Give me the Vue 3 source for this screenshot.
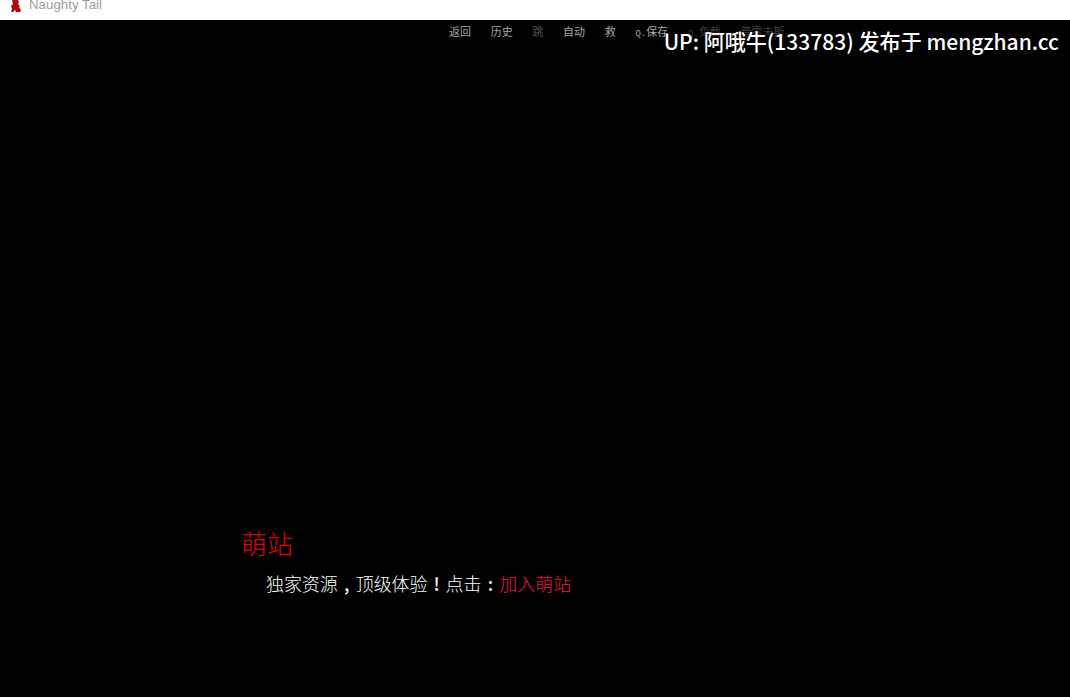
<script setup>
const menu = [
  { label: '返回' },
  { label: '历史' },
  { label: '跳', dim: true },
  { label: '自动' },
  { label: '救' },
  { prefix: 'Q.', label: '保存' },
  { prefix: 'Q.', label: '负载', faint: true },
  { label: '普雷夫斯', faint: true },
]
</script>

<template>
  <div class="window">
    <header class="titlebar">
      <svg class="logo" width="12" height="13" viewBox="0 0 12 13" aria-hidden="true">
        <path d="M2 0h6l1 2-1 2 2 2-1 1 2 3-1 2H6L5 10 3 12 1 12l1-3L1 6l2-2z" fill="#a80c10" />
      </svg>
      <span class="title">Naughty Tail</span>
    </header>
    <main class="stage">
      <nav class="menu">
        <span v-for="item in menu" :key="item.prefix + item.label" :class="{ dim: item.dim, faint: item.faint }"><span v-if="item.prefix" class="prefix">{{ item.prefix }}</span>{{ item.label }}</span>
      </nav>
      <div class="credit">UP: 阿哦牛(133783) 发布于 mengzhan.cc</div>
      <section class="dialog">
        <div class="speaker">萌站</div>
        <p class="line">独家资源<span class="punct">,</span>顶级体验<span class="punct">!</span>点击<span class="punct">:</span><span class="link">加入萌站</span></p>
      </section>
    </main>
  </div>
</template>

<style>
html, body { margin: 0; background: #000; overflow: hidden; }
</style>

<style scoped>
.window { width: 1070px; height: 697px; display: flex; flex-direction: column; overflow: hidden; }
.titlebar { height: 20px; flex: none; background: #fff; display: flex; align-items: flex-start; overflow: hidden; padding-left: 10px; box-sizing: border-box; }
.logo { flex: none; }
.title { margin: -3px 0 0 7px; font: 13.3px/16px "Liberation Sans", Arial, sans-serif; color: #a39b9b; }
.stage { flex: 1; background: #000; position: relative; display: flex; flex-direction: column; }
.menu { display: flex; gap: 19.7px; padding: 5px 0 0 449px; font: 400 11px/13px "Noto Sans CJK SC", sans-serif; color: #a8a8a8; }
.menu .dim { color: #555; }
.menu .faint { color: #3e3e3e; }
.prefix { font: 9px/13px "Liberation Mono", monospace; }
.credit { position: absolute; top: 6px; right: 11px; font: 500 21.05px/30px "Noto Sans CJK SC", "Noto Sans", sans-serif; color: #fff; white-space: nowrap; }
.dialog { margin-top: 477px; padding-left: 241px; font-family: "Noto Sans CJK SC", sans-serif; }
.speaker { font-size: 26px; font-weight: 300; line-height: 50px; height: 52px; color: #e00008; }
.line { margin: 0; padding-left: 25px; font: 300 18px/26px "Noto Sans CJK SC", sans-serif; letter-spacing: -0.07px; color: #fff; white-space: nowrap; }
.punct { display: inline-block; width: 1em; text-align: center; font-weight: 500; }
.link { color: #f01444; }
</style>
